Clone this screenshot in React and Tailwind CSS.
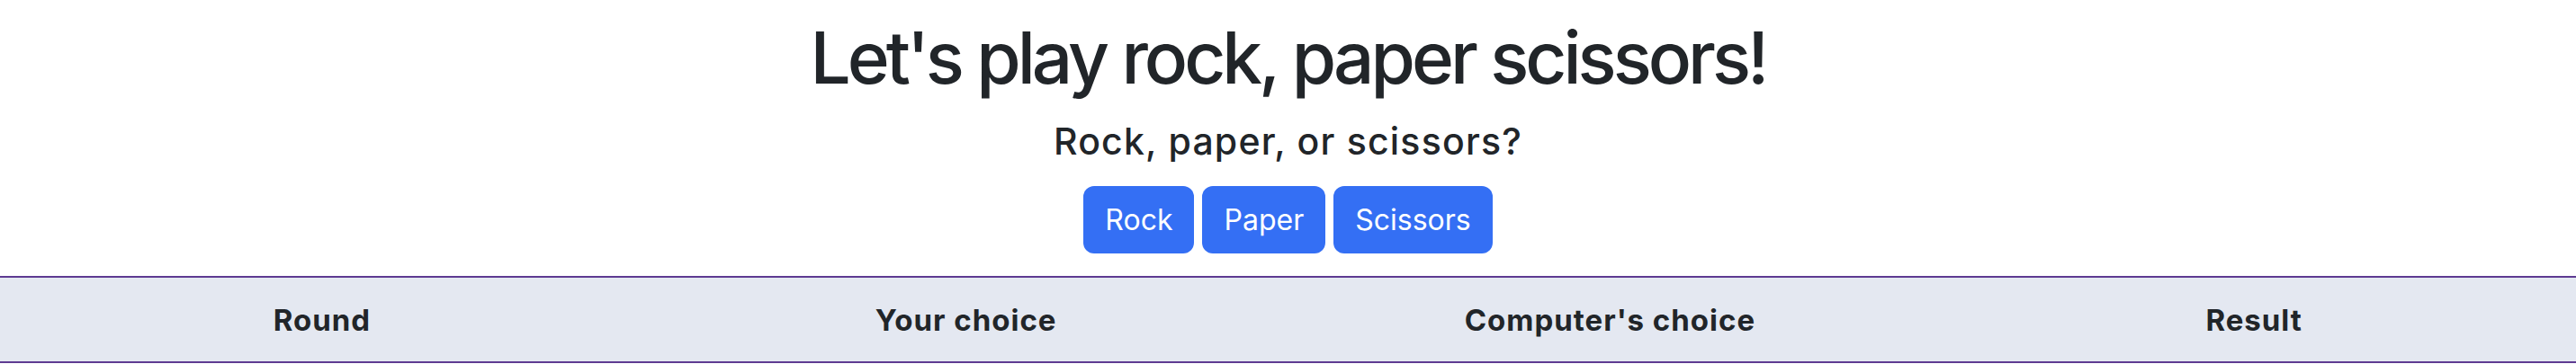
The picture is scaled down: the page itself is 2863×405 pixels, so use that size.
import { useState } from 'react'

const choices = ['Rock', 'Paper', 'Scissors']
const columns = ['Round', 'Your choice', "Computer's choice", 'Result']

export default function App() {
  const [rounds, setRounds] = useState([])

  function play(choice) {
    const computer = choices[Math.floor(Math.random() * 3)]
    setRounds((r) => [...r, { choice, computer }])
  }

  return (
    <div className="min-h-screen bg-white text-[#212529] font-['Inter','Liberation_Sans',sans-serif]">
      <div className="flex flex-col items-center pt-4">
        <h1 className="text-[80px] leading-[96px] font-medium tracking-[-4px] mb-[21px]">
          Let's play rock, paper scissors!
        </h1>
        <h5 className="text-[41px] leading-[48px] font-medium tracking-[1.2px] mb-[26px]">
          Rock, paper, or scissors?
        </h5>
        <div className="flex gap-[9px]">
          {choices.map((c) => (
            <button
              key={c}
              type="button"
              onClick={() => play(c)}
              className="h-[75px] px-6 rounded-xl bg-[#346ff4] text-white text-[32px] leading-[48px]"
            >
              {c}
            </button>
          ))}
        </div>
      </div>

      <table className="mt-[25px] w-full table-fixed border-collapse">
        <thead>
          <tr className="bg-[#e4e8f1] border-y-2 border-[#5e3b92]">
            {columns.map((col) => (
              <th key={col} className="h-[95px] text-center text-[33px] leading-[48px] font-bold tracking-[1px]">
                {col}
              </th>
            ))}
          </tr>
        </thead>
        <tbody>
          {rounds.map((r, i) => (
            <tr key={i}>
              <td className="text-center text-[32px]">{i + 1}</td>
              <td className="text-center text-[32px]">{r.choice}</td>
              <td className="text-center text-[32px]">{r.computer}</td>
              <td className="text-center text-[32px]"></td>
            </tr>
          ))}
        </tbody>
      </table>
    </div>
  )
}
